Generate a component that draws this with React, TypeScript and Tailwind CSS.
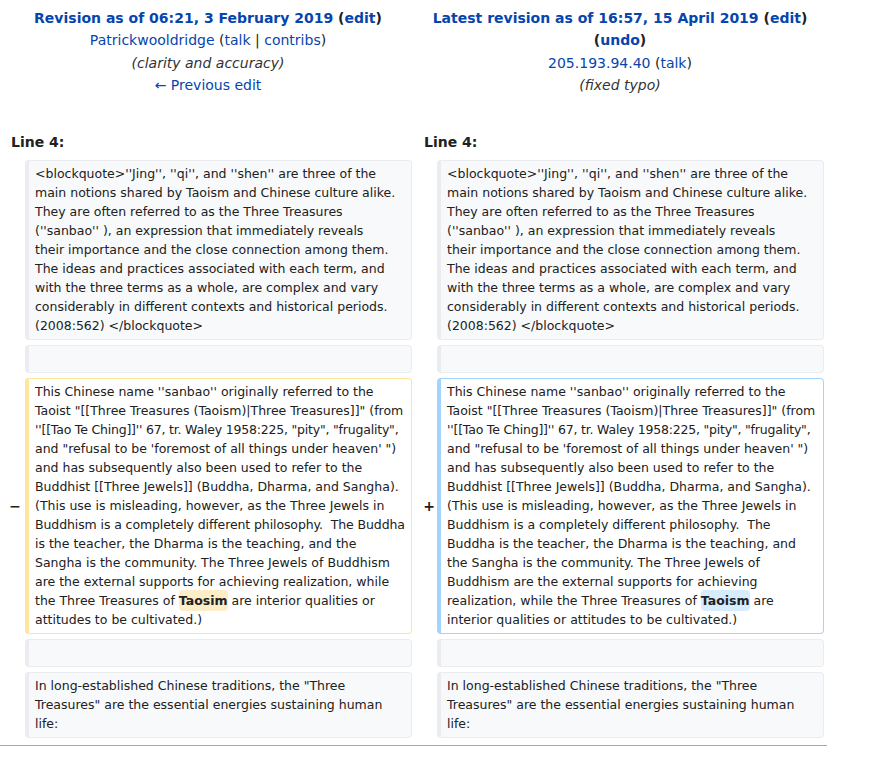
import React from "react";

type Kind = "ctx" | "del" | "add";

const kindCls: Record<Kind, string> = {
  ctx: "bg-[#f8f9fa] border-[#eaecf0]",
  del: "bg-white border-[#ffe49c]",
  add: "bg-white border-[#a3d3ff]",
};

function Box({ kind, lines, empty }: { kind: Kind; lines?: React.ReactNode[]; empty?: boolean }) {
  return (
    <div
      className={`rounded-[4px] border border-l-4 px-[6px] pt-[3px] pb-[4px] text-[12.5px] leading-[19px] whitespace-pre overflow-hidden text-[#202122] ${kindCls[kind]} ${empty ? "h-[28px]" : ""}`}
    >
      {lines?.map((l, i) => (
        <div key={i}>{l}</div>
      ))}
    </div>
  );
}

const quoteLines = [
  "<blockquote>''Jing'', ''qi'', and ''shen'' are three of the",
  "main notions shared by Taoism and Chinese culture alike.",
  "They are often referred to as the Three Treasures",
  "(''sanbao'' ), an expression that immediately reveals",
  "their importance and the close connection among them.",
  "The ideas and practices associated with each term, and",
  "with the three terms as a whole, are complex and vary",
  "considerably in different contexts and historical periods.",
  "(2008:562) </blockquote>",
];

const commonStart: React.ReactNode[] = [
  "This Chinese name ''sanbao'' originally referred to the",
  "Taoist \"[[Three Treasures (Taoism)|Three Treasures]]\" (from",
  <span className="tracking-[-0.2px]">''[[Tao Te Ching]]'' 67, tr. Waley 1958:225, "pity", "frugality",</span>,
  "and \"refusal to be 'foremost of all things under heaven' \")",
  "and has subsequently also been used to refer to the",
  "Buddhist [[Three Jewels]] (Buddha, Dharma, and Sangha).",
  "(This use is misleading, however, as the Three Jewels in",
];

const leftLines: React.ReactNode[] = [
  ...commonStart,
  <span className="tracking-[-0.1px]">Buddhism is a completely different philosophy.  The Buddha</span>,
  "is the teacher, the Dharma is the teaching, and the",
  "Sangha is the community. The Three Jewels of Buddhism",
  "are the external supports for achieving realization, while",
  <>
    the Three Treasures of{" "}
    <span className="font-bold bg-[#feeec8] rounded-[4px] py-[3px]">Taosim</span> are interior qualities or
  </>,
  "attitudes to be cultivated.)",
];

const rightLines: React.ReactNode[] = [
  ...commonStart,
  "Buddhism is a completely different philosophy.  The",
  "Buddha is the teacher, the Dharma is the teaching, and",
  "the Sangha is the community. The Three Jewels of",
  "Buddhism are the external supports for achieving",
  <>
    realization, while the Three Treasures of{" "}
    <span className="font-bold bg-[#d8ecff] rounded-[4px] py-[3px]">Taoism</span> are
  </>,
  "interior qualities or attitudes to be cultivated.)",
];

const lastLines = [
  "In long-established Chinese traditions, the \"Three",
  "Treasures\" are the essential energies sustaining human",
  "life:",
];

const link = "text-[#0645ad]";

export default function App() {
  return (
    <div className="w-[874px] h-[762px] bg-white font-['DejaVu_Sans',sans-serif] text-[#202122]">
      {/* headers */}
      <div className="grid grid-cols-[412px_412px] ml-[2px] pt-[7px] text-[14px] leading-[22.4px] text-center">
        <div>
          <div className="font-bold">
            <span className={link}>Revision as of 06:21, 3 February 2019</span> (<span className={link}>edit</span>)
          </div>
          <div>
            <span className={link}>Patrickwooldridge</span> (<span className={link}>talk</span> |{" "}
            <span className={link}>contribs</span>)
          </div>
          <div className="italic text-[#333333]">(clarity and accuracy)</div>
          <div className={link}>← Previous edit</div>
        </div>
        <div>
          <div className="font-bold">
            <span className={link}>Latest revision as of 16:57, 15 April 2019</span> (<span className={link}>edit</span>)
          </div>
          <div className="font-bold">
            (<span className={link}>undo</span>)
          </div>
          <div>
            <span className={link}>205.193.94.40</span> (<span className={link}>talk</span>)
          </div>
          <div className="italic text-[#333333]">(fixed typo)</div>
        </div>
      </div>

      {/* line numbers */}
      <div className="grid grid-cols-[412px_412px] mt-[34px] mb-[7px] text-[14px] leading-[22.4px] font-bold">
        <div className="pl-[11px]">Line 4:</div>
        <div className="pl-[12px]">Line 4:</div>
      </div>

      {/* diff rows */}
      <div className="grid grid-cols-[25px_387px_25px_387px] gap-y-[5px]">
        <div />
        <Box kind="ctx" lines={quoteLines} />
        <div />
        <Box kind="ctx" lines={quoteLines} />

        <div />
        <Box kind="ctx" empty />
        <div />
        <Box kind="ctx" empty />

        <div className="flex items-center justify-end pr-[4px] text-[14px] font-bold">−</div>
        <Box kind="del" lines={leftLines} />
        <div className="flex items-center justify-end pr-[2px] text-[14px] font-bold">+</div>
        <Box kind="add" lines={rightLines} />

        <div />
        <Box kind="ctx" empty />
        <div />
        <Box kind="ctx" empty />

        <div />
        <Box kind="ctx" lines={lastLines} />
        <div />
        <Box kind="ctx" lines={lastLines} />
      </div>

      <div className="mt-[7px] w-[827px] h-px bg-[#a2a9b1]" />
    </div>
  );
}
